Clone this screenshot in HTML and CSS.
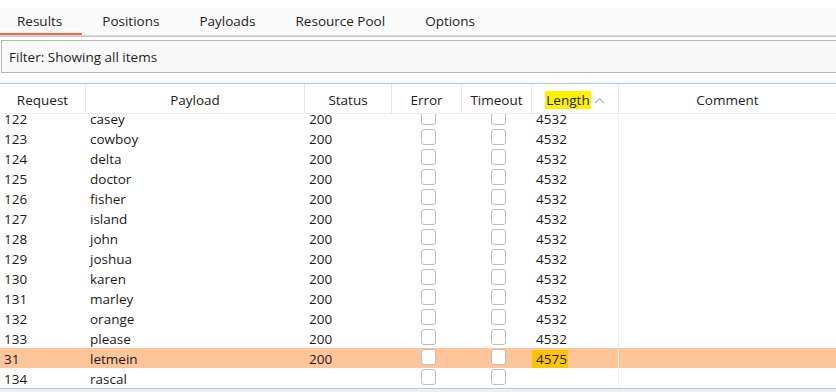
FILE: index.html
```html
<!DOCTYPE html>
<html>
<head>
<meta charset="utf-8">
<link rel="stylesheet" href="styles.css">
</head>
<body>
<div class="app">
  <div class="tabs">
    <div class="tab active">Results</div>
    <div class="tab">Positions</div>
    <div class="tab">Payloads</div>
    <div class="tab">Resource Pool</div>
    <div class="tab">Options</div>
  </div>
  <div class="filter">Filter: Showing all items</div>
  <div class="gap"></div>
  <div class="table">
    <div class="row head">
      <div class="th">Request</div>
      <div class="th">Payload</div>
      <div class="th">Status</div>
      <div class="th">Error</div>
      <div class="th">Timeout</div>
      <div class="th"><span class="sortlabel"><span class="mark">Length</span><svg class="caret" width="11" height="7" viewBox="0 0 11 7"><path d="M1 6 L5.5 1.5 L10 6" fill="none" stroke="#b8b8b8" stroke-width="1.2"/></svg></span></div>
      <div class="th last">Comment</div>
    </div>
    <div class="viewport">
      <div class="rows">
        <div class="row"><div class="td">122</div><div class="td">casey</div><div class="td">200</div><div class="td"><span class="cb"></span></div><div class="td"><span class="cb"></span></div><div class="td len">4532</div><div class="td cm"></div></div>
        <div class="row"><div class="td">123</div><div class="td">cowboy</div><div class="td">200</div><div class="td"><span class="cb"></span></div><div class="td"><span class="cb"></span></div><div class="td len">4532</div><div class="td cm"></div></div>
        <div class="row"><div class="td">124</div><div class="td">delta</div><div class="td">200</div><div class="td"><span class="cb"></span></div><div class="td"><span class="cb"></span></div><div class="td len">4532</div><div class="td cm"></div></div>
        <div class="row"><div class="td">125</div><div class="td">doctor</div><div class="td">200</div><div class="td"><span class="cb"></span></div><div class="td"><span class="cb"></span></div><div class="td len">4532</div><div class="td cm"></div></div>
        <div class="row"><div class="td">126</div><div class="td">fisher</div><div class="td">200</div><div class="td"><span class="cb"></span></div><div class="td"><span class="cb"></span></div><div class="td len">4532</div><div class="td cm"></div></div>
        <div class="row"><div class="td">127</div><div class="td">island</div><div class="td">200</div><div class="td"><span class="cb"></span></div><div class="td"><span class="cb"></span></div><div class="td len">4532</div><div class="td cm"></div></div>
        <div class="row"><div class="td">128</div><div class="td">john</div><div class="td">200</div><div class="td"><span class="cb"></span></div><div class="td"><span class="cb"></span></div><div class="td len">4532</div><div class="td cm"></div></div>
        <div class="row"><div class="td">129</div><div class="td">joshua</div><div class="td">200</div><div class="td"><span class="cb"></span></div><div class="td"><span class="cb"></span></div><div class="td len">4532</div><div class="td cm"></div></div>
        <div class="row"><div class="td">130</div><div class="td">karen</div><div class="td">200</div><div class="td"><span class="cb"></span></div><div class="td"><span class="cb"></span></div><div class="td len">4532</div><div class="td cm"></div></div>
        <div class="row"><div class="td">131</div><div class="td">marley</div><div class="td">200</div><div class="td"><span class="cb"></span></div><div class="td"><span class="cb"></span></div><div class="td len">4532</div><div class="td cm"></div></div>
        <div class="row"><div class="td">132</div><div class="td">orange</div><div class="td">200</div><div class="td"><span class="cb"></span></div><div class="td"><span class="cb"></span></div><div class="td len">4532</div><div class="td cm"></div></div>
        <div class="row"><div class="td">133</div><div class="td">please</div><div class="td">200</div><div class="td"><span class="cb"></span></div><div class="td"><span class="cb"></span></div><div class="td len">4532</div><div class="td cm"></div></div>
        <div class="row hl"><div class="td">31</div><div class="td">letmein</div><div class="td">200</div><div class="td"><span class="cb"></span></div><div class="td"><span class="cb"></span></div><div class="td len"><span class="mark2">4575</span></div><div class="td cm"></div></div>
        <div class="row"><div class="td">134</div><div class="td">rascal</div><div class="td"></div><div class="td"><span class="cb"></span></div><div class="td"><span class="cb"></span></div><div class="td len"></div><div class="td cm"></div></div>
      </div>
    </div>
  </div>
  <div class="foot"></div>
</div>
</body>
</html>
```

FILE: styles.css
```css
html, body {
  margin: 0;
  padding: 0;
  background: #ffffff;
}
body {
  font-family: "Open Sans", "Noto Sans", sans-serif;
  font-size: 13.5px;
  color: #1a1a1a;
  width: 836px;
  height: 392px;
  overflow: hidden;
}
.app {
  display: flex;
  flex-direction: column;
  padding-top: 8px;
}
.tabs {
  display: flex;
  height: 27px;
  background: #fafafa;
  border-bottom: 1px solid #d6d6d6;
  box-shadow: 0 1px 0 #c9c9c9;
  margin-left: -3px;
}
.tab {
  padding: 0 20px;
  line-height: 27px;
  color: #222;
  border-bottom: 2px solid transparent;
  height: 25px;
}
.tab.active {
  border-bottom-color: #f26a3d;
}
.filter {
  margin: 4px 0 0 1px;
  height: 30px;
  padding-top: 1px;
  border: 1px solid #b5b5b5;
  border-right: none;
  background: #f9f9f9;
  line-height: 31px;
  padding-left: 7px;
  color: #1e1e1e;
}
.gap {
  height: 10px;
  background: #fcfcfc;
}
.table {
  border-top: 1px solid #a9c6e8;
  border-bottom: 1px solid #a9c6e8;
  display: flex;
  flex-direction: column;
}
.row {
  display: grid;
  grid-template-columns: 86px 219px 87px 70px 70px 87px 1fr;
  height: 20px;
}
.row.head {
  height: 29px;
  border-bottom: 1px solid #ececec;
}
.th {
  border-right: 1px solid #e6e6e6;
  display: flex;
  align-items: center;
  justify-content: center;
  color: #222;
  padding-top: 3px;
}
.th.last {
  border-right: none;
}
.sortlabel {
  display: inline-flex;
  align-items: center;
  gap: 3px;
}
.mark {
  background: #fff200;
  padding: 0 1px;
}
.caret {
  display: block;
  margin-top: 1px;
}
.viewport {
  height: 274px;
  overflow: hidden;
}
.rows {
  margin-top: -6px;
}
.td {
  line-height: 20px;
  padding-top: 1px;
  white-space: nowrap;
  overflow: hidden;
}
.row .td:nth-child(1) { padding-left: 4px; }
.row .td:nth-child(2) { padding-left: 4px; }
.row .td:nth-child(3) { padding-left: 4px; }
.row .td:nth-child(6) { padding-left: 4px; border-right: 1px solid #efefef; }
.row.hl {
  background: #fec59b;
}
.cb {
  display: block;
  width: 13px;
  height: 14px;
  margin: 0 0 0 29px;
  border: 1.5px solid #bdbdbd;
  border-radius: 3px;
  background: #ffffff;
}
.mark2 {
  background: #fcc500;
  padding: 0 1px 0 5px;
  margin-left: -5px;
}
.foot {
  height: 4px;
  background: #f0f0f0;
}
```
